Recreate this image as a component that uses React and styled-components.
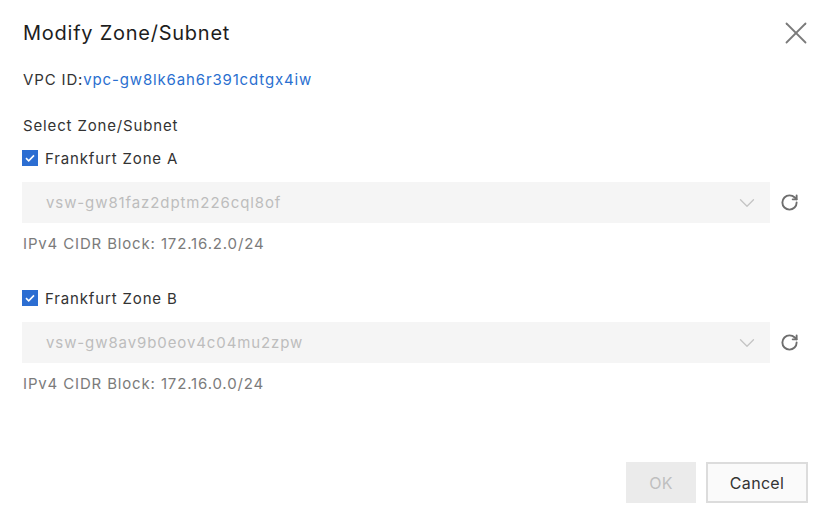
import styled, { createGlobalStyle } from 'styled-components';
import { X, ChevronDown, RotateCw } from 'lucide-react';

const GlobalStyle = createGlobalStyle`
  body {
    margin: 0;
    background: #fff;
    font-family: Inter, "Noto Sans", sans-serif;
  }
`;

const Dialog = styled.div`
  width: 832px;
  height: 520px;
  box-sizing: border-box;
  padding: 19px 24px 17px 22px;
  display: flex;
  flex-direction: column;
  background: #fff;
`;

const Header = styled.div`
  display: flex;
  justify-content: space-between;
  align-items: center;
  height: 28px;
`;

const Title = styled.h2`
  margin: 0 0 0 1px;
  font-size: 20px;
  font-weight: 400;
  color: #1d1d1d;
  letter-spacing: 0.75px;
`;

const CloseButton = styled.button`
  border: 0;
  background: none;
  padding: 0;
  margin-right: -7px;
  display: flex;
  color: #7a7a7a;
  cursor: pointer;
`;

const Line = styled.div`
  font-size: 15px;
  line-height: 20px;
  letter-spacing: 0.85px;
  color: ${(p) => p.$muted ? '#7b7b7b' : '#333'};
  margin-top: ${(p) => p.$top}px;
  padding-left: 1px;
`;

const Link = styled.a`
  color: #2a6fd0;
  text-decoration: none;
`;

const CheckRow = styled.label`
  display: flex;
  align-items: center;
  gap: 7px;
  height: 20px;
  font-size: 15px;
  letter-spacing: 0.85px;
  color: #333;
  margin-top: ${(p) => p.$top}px;
`;

const Box = styled.span`
  width: 16px;
  height: 16px;
  background: #2c6ed2;
  display: flex;
  align-items: center;
  justify-content: center;
`;

const SelectRow = styled.div`
  display: flex;
  align-items: center;
  gap: 10px;
  margin-top: 14px;
`;

const Select = styled.div`
  width: 748px;
  height: 41px;
  box-sizing: border-box;
  background: #f5f5f5;
  display: flex;
  align-items: center;
  justify-content: space-between;
  padding: 0 10px 0 24px;
  font-size: 15px;
  letter-spacing: 0.9px;
  color: #bdbdbd;
`;

const Refresh = styled.button`
  border: 0;
  background: none;
  padding: 0;
  display: flex;
  color: #6e6e6e;
`;

const Footer = styled.div`
  margin-top: auto;
  display: flex;
  justify-content: flex-end;
  gap: 10px;
`;

const Button = styled.button`
  height: 41px;
  min-width: ${(p) => p.$w}px;
  box-sizing: border-box;
  font-family: inherit;
  font-size: 16px;
  letter-spacing: 0.3px;
  border: ${(p) => p.$disabled ? '0' : '2px solid #dcdcdc'};
  background: ${(p) => p.$disabled ? '#ebebeb' : '#fafafa'};
  color: ${(p) => p.$disabled ? '#bfbfbf' : '#333'};
`;

const zones = [
  { name: 'Frankfurt Zone A', vsw: 'vsw-gw81faz2dptm226cql8of', cidr: '172.16.2.0/24', top: 12 },
  { name: 'Frankfurt Zone B', vsw: 'vsw-gw8av9b0eov4c04mu2zpw', cidr: '172.16.0.0/24', top: 34 },
];

function Check() {
  return (
    <Box>
      <svg width="12" height="12" viewBox="0 0 12 12">
        <path d="M2 6.2l2.7 2.6L10 3.4" fill="none" stroke="#fff" strokeWidth="1.6" />
      </svg>
    </Box>
  );
}

export default function App() {
  return (
    <>
      <GlobalStyle />
      <Dialog>
        <Header>
          <Title>Modify Zone/Subnet</Title>
          <CloseButton><X size={38} strokeWidth={1.15} /></CloseButton>
        </Header>
        <Line $top={23}>VPC ID:<Link>vpc-gw8lk6ah6r391cdtgx4iw</Link></Line>
        <Line $top={26}>Select Zone/Subnet</Line>
        {zones.map((z) => (
          <div key={z.name}>
            <CheckRow $top={z.top}>
              <Check />
              {z.name}
            </CheckRow>
            <SelectRow>
              <Select>
                {z.vsw}
                <ChevronDown size={26} strokeWidth={1.2} color="#c4c4c4" />
              </Select>
              <Refresh><RotateCw size={19} strokeWidth={2.4} /></Refresh>
            </SelectRow>
            <Line $muted $top={11}>IPv4 CIDR Block: {z.cidr}</Line>
          </div>
        ))}
        <Footer>
          <Button $disabled $w={70}>OK</Button>
          <Button $w={102}>Cancel</Button>
        </Footer>
      </Dialog>
    </>
  );
}
